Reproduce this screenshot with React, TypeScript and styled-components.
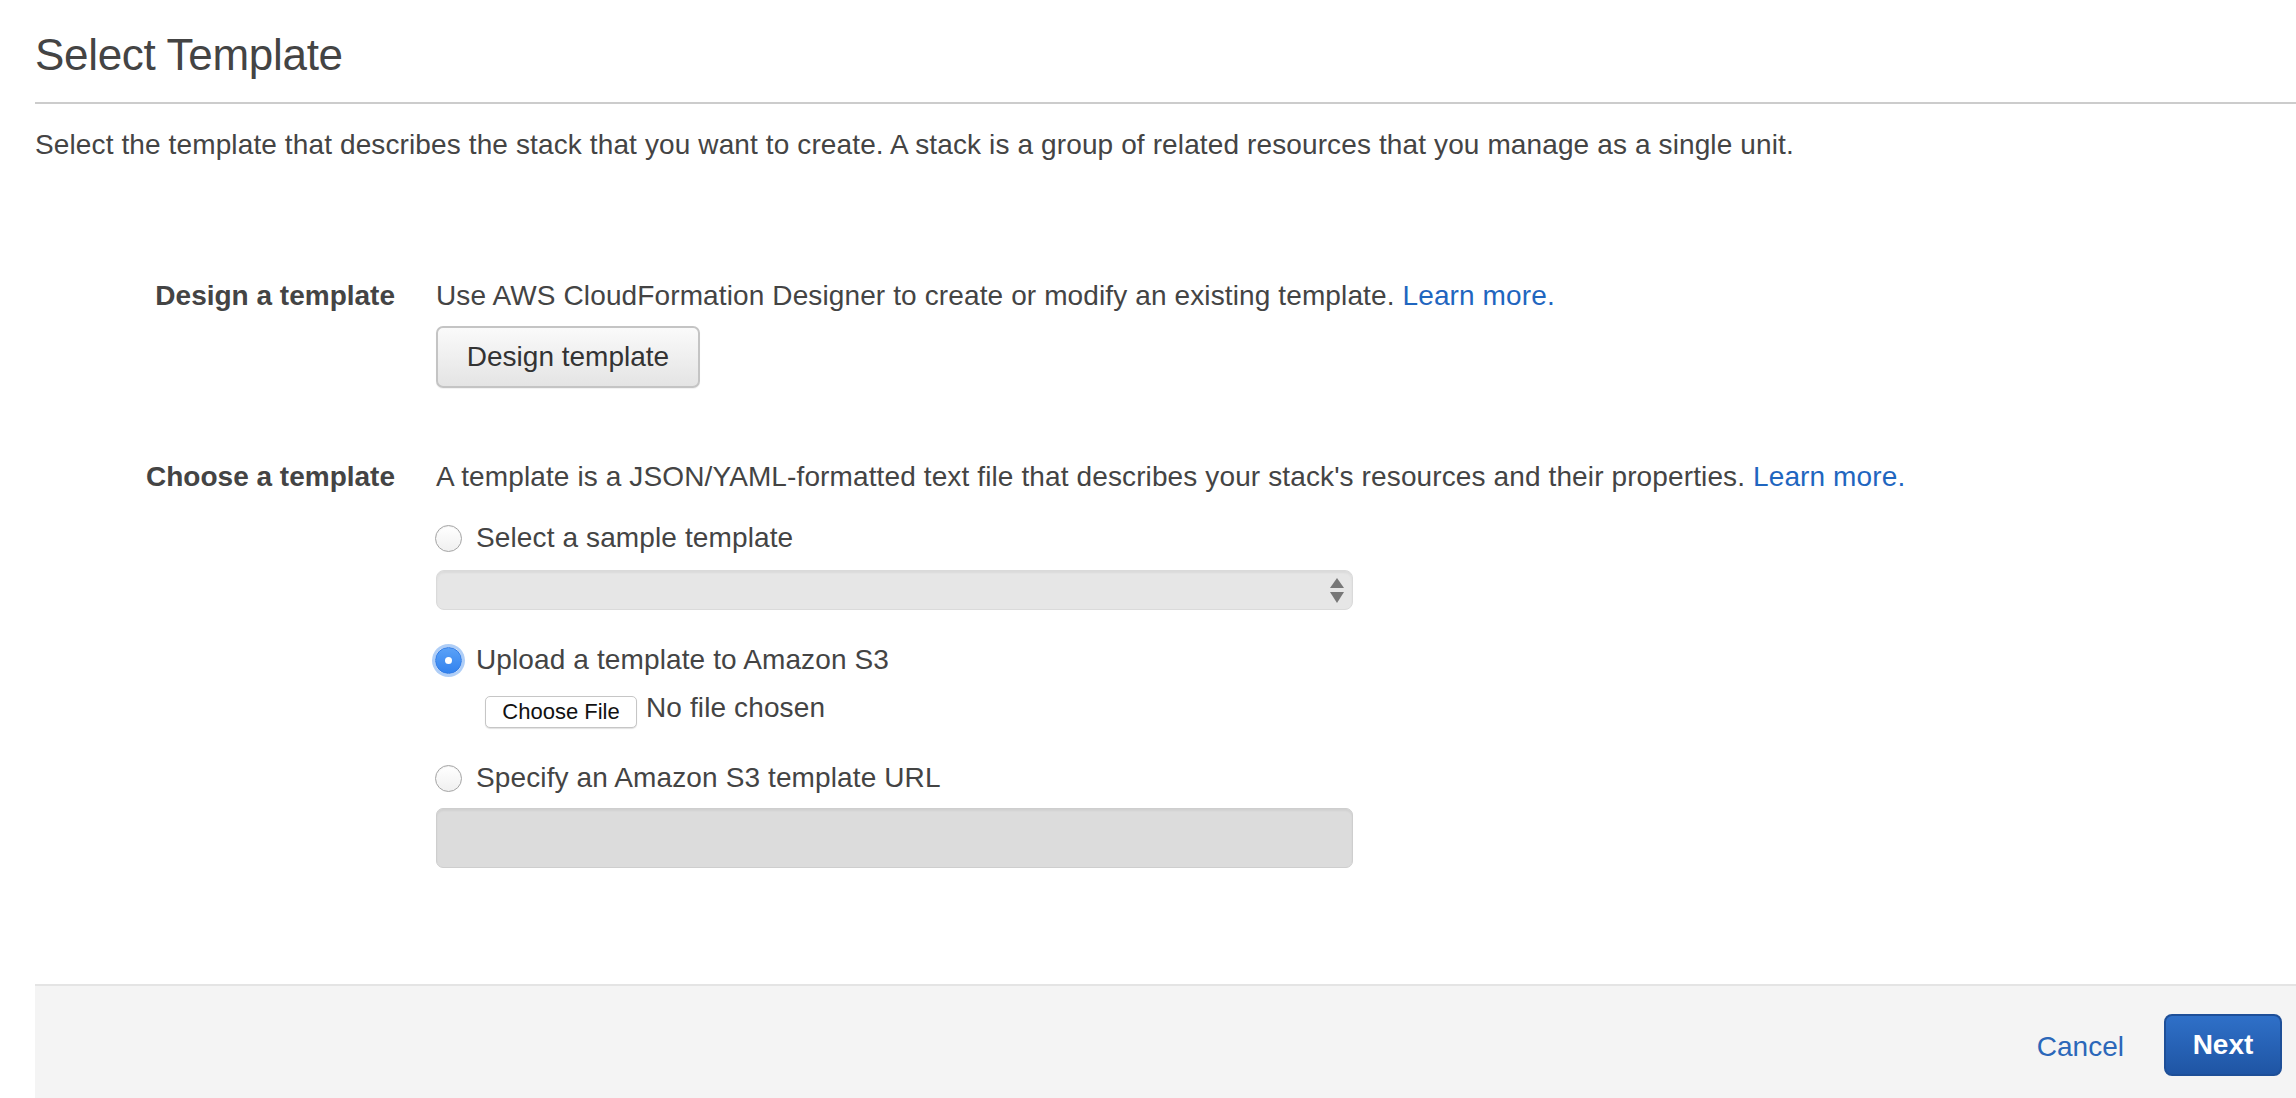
import React, { FC } from 'react'
import styled, { createGlobalStyle } from 'styled-components'

const GlobalStyle = createGlobalStyle`
  html, body {
    margin: 0;
    padding: 0;
    background: #fff;
  }
  body {
    font-family: 'Liberation Sans', Arial, Helvetica, sans-serif;
    color: #444;
    height: 1098px;
    overflow: hidden;
  }
`

const Page = styled.div`
  display: flex;
  flex-direction: column;
  min-height: 1098px;
  padding-left: 35px;
`

const Title = styled.h1`
  margin: 29px 0 0;
  font-size: 44px;
  line-height: 52px;
  font-weight: 400;
  letter-spacing: -0.3px;
  color: #444;
`

const Divider = styled.hr`
  margin: 21px 0 0;
  border: none;
  border-top: 2px solid #cccccc;
  height: 0;
`

const Intro = styled.p`
  margin: 23px 0 0;
  font-size: 28px;
  line-height: 36px;
  letter-spacing: 0.12px;
  color: #444;
`

const Section = styled.div<{ $top: number }>`
  display: grid;
  grid-template-columns: 360px 1fr;
  column-gap: 41px;
  margin-top: ${(p) => p.$top}px;
`

const Label = styled.div`
  text-align: right;
  font-size: 28px;
  line-height: 36px;
  font-weight: 700;
  color: #444;
`

const Field = styled.div`
  display: flex;
  flex-direction: column;
  align-items: flex-start;
`

const Text = styled.div`
  font-size: 28px;
  line-height: 36px;
  letter-spacing: 0.12px;
  color: #444;
`

const Link = styled.a`
  color: #1f66bf;
  text-decoration: none;
  cursor: pointer;
`

const GreyButton = styled.button`
  margin-top: 12px;
  width: 264px;
  height: 62px;
  font-family: inherit;
  font-size: 28px;
  color: #333;
  background: linear-gradient(#fafafa, #e4e4e4);
  border: 2px solid #c4c4c4;
  border-radius: 7px;
  box-shadow: 0 1px 1px rgba(0, 0, 0, 0.06);
  cursor: pointer;
`

const RadioRow = styled.label<{ $top: number }>`
  display: flex;
  align-items: center;
  gap: 14px;
  margin-top: ${(p) => p.$top}px;
  font-size: 28px;
  line-height: 36px;
  letter-spacing: 0.12px;
  color: #444;
  cursor: pointer;
`

const RadioDot = styled.span<{ $checked?: boolean }>`
  box-sizing: border-box;
  width: 27px;
  height: 27px;
  margin-left: -1px;
  border-radius: 50%;
  display: flex;
  align-items: center;
  justify-content: center;
  flex-shrink: 0;
  border: 1px solid ${(p) => (p.$checked ? '#2f7ae5' : '#a4a4a4')};
  background: ${(p) => (p.$checked ? 'linear-gradient(#5aa1f7, #3282ee)' : 'linear-gradient(#ffffff, #f0f0f0)')};
  box-shadow: ${(p) => (p.$checked ? '0 0 0 3px rgba(110, 165, 240, 0.55)' : 'inset 0 1px 1px rgba(0,0,0,0.06)')};

  &::after {
    content: '';
    display: ${(p) => (p.$checked ? 'block' : 'none')};
    width: 7px;
    height: 7px;
    border-radius: 50%;
    background: #fff;
  }
`

const SelectWrap = styled.div`
  position: relative;
  margin-top: 14px;
  width: 917px;
`

const Select = styled.select`
  display: block;
  box-sizing: border-box;
  width: 100%;
  height: 40px;
  appearance: none;
  background: #dcdcdc;
  border: 1px solid #cbcbcb;
  border-radius: 8px;
  box-shadow: inset 0 2px 2px rgba(0, 0, 0, 0.07);
`

const Arrows = styled.svg`
  position: absolute;
  right: 9px;
  top: 8px;
  pointer-events: none;
`

const FileRow = styled.div`
  display: flex;
  align-items: center;
  gap: 9px;
  height: 36px;
  margin: 12px 0 0 49px;
`

const FileButton = styled.button`
  box-sizing: border-box;
  height: 32px;
  width: 152px;
  margin-top: 8px;
  padding: 0;
  font-family: 'Liberation Sans', Arial, sans-serif;
  font-size: 22px;
  color: #111;
  background: #fff;
  border: 1px solid #c6c6c6;
  border-radius: 5px;
  box-shadow: 0 1px 1px rgba(0, 0, 0, 0.12);
`

const FileName = styled.span`
  font-size: 28px;
  line-height: 36px;
  letter-spacing: 0.12px;
  color: #444;
`

const UrlInput = styled.input`
  display: block;
  box-sizing: border-box;
  margin-top: 12px;
  width: 917px;
  height: 60px;
  background: #dcdcdc;
  border: 1px solid #cecece;
  border-radius: 7px;
  box-shadow: inset 0 2px 2px rgba(0, 0, 0, 0.05);
`

const Footer = styled.div`
  margin-top: auto;
  display: flex;
  justify-content: flex-end;
  align-items: flex-start;
  gap: 40px;
  height: 114px;
  padding: 28px 14px 0 0;
  box-sizing: border-box;
  background: #f4f4f4;
  border-top: 2px solid #e4e4e4;
`

const CancelLink = styled.a`
  margin-top: 15px;
  font-size: 28px;
  line-height: 36px;
  color: #2b67b9;
  cursor: pointer;
`

const NextButton = styled.button`
  width: 118px;
  height: 62px;
  font-family: inherit;
  font-size: 28px;
  font-weight: 700;
  color: #fff;
  background: linear-gradient(#2f70c8, #1f55a4);
  border: 2px solid #1e4f98;
  border-radius: 8px;
  cursor: pointer;
`

const App: FC = () => (
  <>
    <GlobalStyle />
    <Page>
      <Title>Select Template</Title>
      <Divider />
      <Intro>
        Select the template that describes the stack that you want to create. A stack is a group of related resources that
        you manage as a single unit.
      </Intro>

      <Section $top={115}>
        <Label>Design a template</Label>
        <Field>
          <Text>
            Use AWS CloudFormation Designer to create or modify an existing template. <Link>Learn more.</Link>
          </Text>
          <GreyButton type={'button'}>Design template</GreyButton>
        </Field>
      </Section>

      <Section $top={71}>
        <Label>Choose a template</Label>
        <Field>
          <Text>
            A template is a JSON/YAML-formatted text file that describes your stack's resources and their properties.{' '}
            <Link>Learn more.</Link>
          </Text>

          <RadioRow $top={25}>
            <RadioDot />
            Select a sample template
          </RadioRow>
          <SelectWrap>
            <Select disabled />
            <Arrows width="14" height="25" viewBox="0 0 14 25">
              <path d="M7 0 L14 10 L0 10 Z" fill="#777" />
              <path d="M0 14 L14 14 L7 25 Z" fill="#777" />
            </Arrows>
          </SelectWrap>

          <RadioRow $top={32}>
            <RadioDot $checked />
            Upload a template to Amazon S3
          </RadioRow>
          <FileRow>
            <FileButton type={'button'}>Choose File</FileButton>
            <FileName>No file chosen</FileName>
          </FileRow>

          <RadioRow $top={34}>
            <RadioDot />
            Specify an Amazon S3 template URL
          </RadioRow>
          <UrlInput type="text" disabled />
        </Field>
      </Section>

      <Footer>
        <CancelLink>Cancel</CancelLink>
        <NextButton type={'button'}>Next</NextButton>
      </Footer>
    </Page>
  </>
)

export default App
